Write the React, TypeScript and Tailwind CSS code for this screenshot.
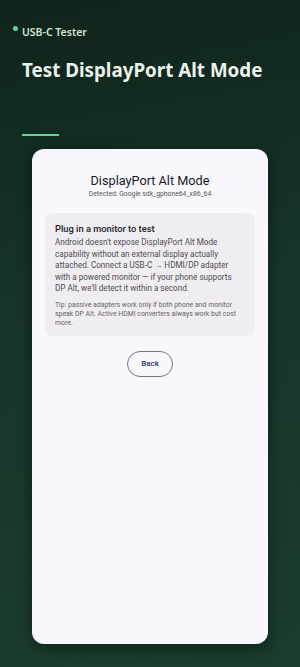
import React from 'react';

const App: React.FC = () => {
  return (
    <div className="w-[300px] h-[667px] overflow-hidden flex flex-col bg-[linear-gradient(170deg,#10241b_0%,#17352a_45%,#1a3d2c_100%)] font-['Noto_Sans',sans-serif]">
      {/* Header */}
      <div className="px-[22px] pt-[25px]">
        <div className="relative flex items-center h-[16px]">
          <span className="absolute left-[-9px] top-[1px] w-[5px] h-[5px] rounded-full bg-[#5ed39b]" />
          <span className="text-[10.5px] font-semibold text-[#d4e3d9]">USB-C Tester</span>
        </div>
        <h1 className="mt-[15px] text-[18.8px] leading-[28px] font-bold text-[#e9f3ec]">Test DisplayPort Alt Mode</h1>
        <div className="mt-[50px] w-[37px] h-[2px] bg-[#5ed39b]" />
      </div>

      {/* Card */}
      <div className="mx-[32px] mt-[13px] h-[495px] rounded-[12px] bg-[#f8f7fd] shadow-[0_4px_14px_rgba(0,0,0,0.45)] px-[13px] pt-[24px] font-['Roboto',sans-serif]">
        <h2 className="text-center text-[12.7px] leading-[16px] text-[#1c1b1f]">DisplayPort Alt Mode</h2>
        <p className="text-center text-[6.8px] leading-[10px] text-[#555]">Detected: Google sdk_gphone64_x86_64</p>

        <div className="mt-[14px] rounded-[8px] bg-[#efedf2] px-[10px] pt-[8.5px] pb-[8.5px]">
          <h3 className="text-[9.3px] leading-[13px] font-medium text-[#1c1b1f]">Plug in a monitor to test</h3>
          <p className="mt-[2.75px] pr-[2px] text-[8.15px] leading-[11.5px] text-[#4f4b55]">
            Android doesn't expose DisplayPort Alt Mode capability without an external display actually attached. Connect a USB-C → HDMI/DP adapter with a powered monitor — if your phone supports DP Alt, we'll detect it within a second.
          </p>
          <p className="mt-[5.75px] text-[6.9px] leading-[9px] text-[#67636c]">
            Tip: passive adapters work only if both phone and monitor speak DP Alt. Active HDMI converters always work but cost more.
          </p>
        </div>

        <div className="mt-[15px] flex justify-center">
          <button className="w-[46px] h-[26px] rounded-full border border-[#79747e] text-[8px] font-medium text-[#27336e]">Back</button>
        </div>
      </div>
    </div>
  );
};

export default App;
